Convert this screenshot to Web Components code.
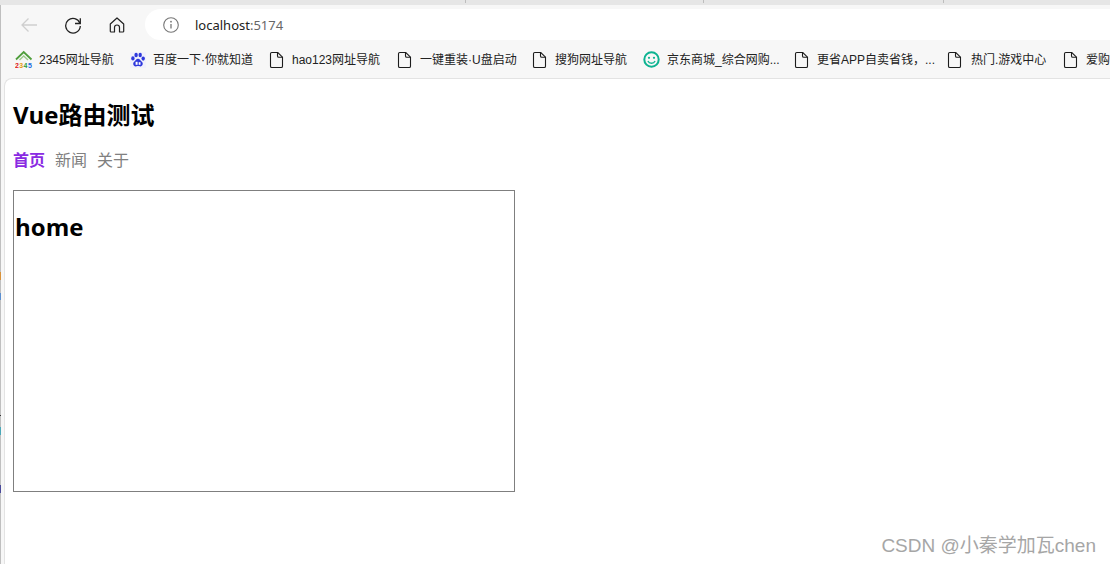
<!DOCTYPE html>
<html lang="zh"><head><meta charset="utf-8"><style>
html,body{margin:0;padding:0;width:1110px;height:564px;overflow:hidden;background:#f7f7f7}
</style></head><body>
<browser-window>
  <tool-bar slot="toolbar" url="localhost" port=":5174"></tool-bar>
  <bookmark-bar slot="bookmarks">
    <bookmark-item w="115" icon="b2345" style="gap:8px">2345网址导航</bookmark-item>
    <bookmark-item w="139" icon="baidu">百度一下·你就知道</bookmark-item>
    <bookmark-item w="128" icon="doc">hao123网址导航</bookmark-item>
    <bookmark-item w="135" icon="doc">一键重装·U盘启动</bookmark-item>
    <bookmark-item w="111" icon="doc">搜狗网址导航</bookmark-item>
    <bookmark-item w="151" icon="smile" style="gap:8px">京东商城_综合网购...</bookmark-item>
    <bookmark-item w="153" icon="doc">更省APP自卖省钱，...</bookmark-item>
    <bookmark-item w="116" icon="doc" style="gap:8px">热门.游戏中心</bookmark-item>
    <bookmark-item w="60" icon="doc">爱购</bookmark-item>
  </bookmark-bar>
  <vue-page>
    <route-link active>首页</route-link><route-link>新闻</route-link><route-link>关于</route-link>
  </vue-page>
</browser-window>
<script>
const CJK='"Noto Sans CJK SC",sans-serif';
const FONT='"Open Sans",'+CJK;
function def(name,css,html,extra){
  customElements.define(name,class extends HTMLElement{
    constructor(){super();this.attachShadow({mode:'open'}).innerHTML='<style>'+css+'</style>'+(typeof html==='function'?html(this):html);}
    connectedCallback(){ if(extra) extra(this); }
  });
}
const ICONS={
 doc:'<svg width="16" height="18" viewBox="0 0 16 18" fill="none"><path d="M1.500 2.800a1.300 1.300 0 0 1 1.300-1.300h6L13.500 6.200v9a1.300 1.300 0 0 1-1.300 1.300H2.800a1.300 1.300 0 0 1-1.300-1.300z" stroke="#1c1c1c" stroke-width="1.100"/><path d="M8.500 1.500v3.400a1.300 1.300 0 0 0 1.300 1.300h3.700" stroke="#1c1c1c" stroke-width="1.100"/></svg>',
 smile:'<svg width="17" height="17" viewBox="0 0 17 17" fill="none"><circle cx="8.500" cy="8.500" r="7.200" stroke="#0db391" stroke-width="2"/><circle cx="6" cy="6.800" r="1.100" fill="#0db391"/><circle cx="11" cy="6.800" r="1.100" fill="#0db391"/><path d="M4.900 10a4 4 0 0 0 7.200 0" stroke="#0db391" stroke-width="1.400"/></svg>',
 baidu:'<svg width="16" height="16" viewBox="0 0 16 16"><rect width="16" height="16" fill="#f1f1fb"/><g fill="#2e38dc"><ellipse cx="2.900" cy="6.400" rx="1.700" ry="2.100"/><ellipse cx="6.100" cy="3" rx="1.700" ry="2.200"/><ellipse cx="10.200" cy="3" rx="1.700" ry="2.200"/><ellipse cx="13.200" cy="6.600" rx="1.700" ry="2.100"/><path d="M8 6.800c2 0 2.400 2 3.800 3 1.800 1.300 1 4.600-1.500 4.600-1 0-1.500-.4-2.300-.4s-1.300.4-2.300.4c-2.500 0-3.300-3.300-1.500-4.600 1.400-1 1.800-3 3.800-3z"/></g><rect x="5.600" y="9.800" width="2" height="3" fill="#fff"/><rect x="8.700" y="10.200" width="1.800" height="2.600" fill="#fff"/></svg>',
 b2345:'<svg width="18" height="19" viewBox="0 0 18 19" fill="none"><path d="M1 9.500 8.700 2l7.800 7.500" stroke="#4f9e3c" stroke-width="1.800"/><path d="M4.500 10 8.700 6l4.300 4" stroke="#9ccb8c" stroke-width="1.400"/><g font-family="Liberation Sans,sans-serif" font-weight="700" font-size="7"><text x="0" y="17.500" fill="#e01818">2</text><text x="4.300" y="17.500" fill="#e89a10">3</text><text x="8.600" y="17.500" fill="#2f9a38">4</text><text x="12.900" y="17.500" fill="#1a6be0">5</text></g></svg>'
};
def('browser-window',`
 :host{display:flex;flex-direction:column;width:1110px;height:564px;position:relative;background:#f7f7f7;overflow:hidden;font-family:${FONT}}
 .top{height:5px;flex:none;background:#e6e6e6;position:relative}
 .top i{position:absolute;top:0;width:1px;height:3px;background:#bdbdbd}
 .strip{position:absolute;left:0;top:5px;width:1px;height:559px;background:#bfbfbf}
 .mark{position:absolute;width:1px;left:0}
 .page{flex:1;min-height:0;display:flex;padding-left:4px}
`,`<div class="top"><i style="left:465px"></i><i style="left:703px"></i><i style="left:943px"></i></div>
 <slot name="toolbar"></slot><slot name="bookmarks"></slot>
 <div class="page"><slot></slot></div>
 <div class="strip"></div>
 <div class="mark" style="top:272px;height:8px;background:#d9923a"></div>
 <div class="mark" style="top:293px;height:7px;background:#5b8fd0"></div>
 <div class="mark" style="top:415px;height:1px;background:#333"></div>
 <div class="mark" style="top:427px;height:8px;background:#4aa8b8"></div>
 <div class="mark" style="top:485px;height:8px;background:#4a4a9a"></div>`);
def('tool-bar',`
 :host{display:flex;align-items:center;height:36px;flex:none;background:#f7f7f7;box-sizing:border-box;padding:4px 0 1px 16px}
 svg{display:block;flex:none}
 .btn{width:26px;height:26px;display:flex;align-items:center;justify-content:center;flex:none}
 .pill{margin-left:15px;flex:1;height:31px;background:#fff;border-radius:16px 0 0 16px;display:flex;align-items:center;padding-left:18px}
 .u{margin-left:16px;font:13px/18px "Noto Sans","Open Sans",sans-serif;color:#222}
 .u span{color:#666}
`,h=>`<div class="btn"><svg width="18" height="16" viewBox="0 0 18 16" fill="none"><path d="M17 8H2M8.500 1.500 2 8l6.500 6.500" stroke="#cfcfcf" stroke-width="1.300"/></svg></div>
 <div class="btn" style="margin-left:18px"><svg width="18" height="18" viewBox="0 0 18 18" fill="none"><path d="M15.900 7.300A7.300 7.300 0 1 0 16.300 10" stroke="#222" stroke-width="1.300"/><path d="M16.300 2.200v5.300H11" stroke="#222" stroke-width="1.300"/></svg></div>
 <div class="btn" style="margin-left:18px"><svg width="18" height="18" viewBox="0 0 18 18" fill="none"><path d="M9 2 2.300 8v7.200a.8.800 0 0 0 .8.800h3.400v-4.500a2.500 2.500 0 0 1 5 0V16h3.400a.8.800 0 0 0 .8-.8V8z" stroke="#222" stroke-width="1.200" stroke-linejoin="round"/></svg></div>
 <div class="pill"><svg width="16" height="16" viewBox="0 0 16 16" fill="none"><circle cx="8" cy="8" r="7.300" stroke="#777" stroke-width="1.100"/><path d="M8 7v4.500" stroke="#777" stroke-width="1.300"/><circle cx="8" cy="4.700" r=".9" fill="#777"/></svg>
 <div class="u">${h.getAttribute('url')||'localhost'}<span>${h.getAttribute('port')||':5174'}</span></div></div>`);
def('bookmark-bar',`
 :host{display:flex;align-items:center;height:37px;flex:none;box-sizing:border-box;padding:0 0 0 15px;background:#f7f7f7;overflow:hidden;white-space:nowrap}
`,'<slot></slot>');
def('bookmark-item',`
 :host{display:flex;align-items:center;flex:none;gap:7px;font-size:12px;line-height:16px;color:#222;font-family:"Liberation Sans",${CJK}}
 .i{width:16px;height:18px;display:flex;align-items:center;flex:none}
 svg{display:block;flex:none}
`,h=>`<div class="i">${ICONS[h.getAttribute('icon')]}</div><slot></slot>`,h=>{h.style.width=h.getAttribute('w')+'px'});
def('vue-page',`
 :host{display:flex;flex-direction:column;flex:1;min-width:0;background:#fff;border:solid #e3e3e3;border-width:1px 0 0 1px;border-radius:8px 0 0 0;box-sizing:border-box;padding:18px 0 0 8px;position:relative;font-family:${FONT};color:#000}
 h1{margin:0;font-size:24px;line-height:36px;font-weight:700}
 nav{display:flex;gap:10px;margin-top:14px;height:24px;font-size:16px;line-height:24px}
 .box{box-sizing:border-box;width:502px;height:302px;border:1px solid #7f7f7f;margin-top:19px;padding:0 0 0 1px}
 h2{margin:19px 0 0;font-size:24px;line-height:34px;font-weight:700;font-family:${FONT}}
 .wm{position:absolute;right:14px;bottom:6px;font:19px/24px "Liberation Sans","Noto Sans CJK SC",sans-serif;color:#a6a6a6;white-space:nowrap}
`,`<h1>Vue路由测试</h1><nav><slot></slot></nav><div class="box"><h2>home</h2></div><div class="wm">CSDN @小秦学加瓦chen</div>`);
def('route-link',`
 :host{display:block;color:#808080;font-family:${CJK}}
 :host([active]){color:#8a2be2;font-weight:700}
`,'<slot></slot>');
</script>
</body></html>
